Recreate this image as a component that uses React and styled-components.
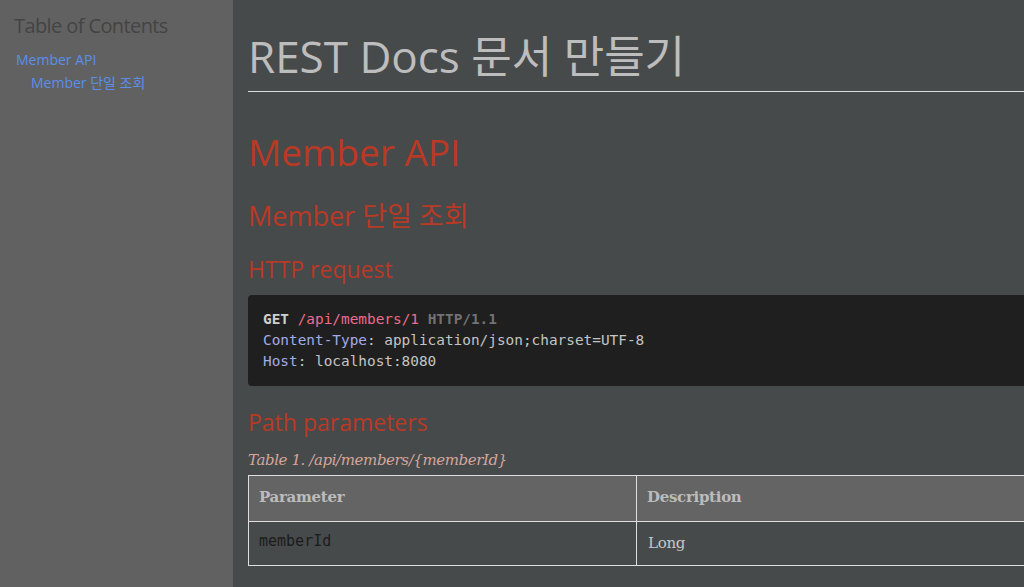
import styled, { createGlobalStyle } from "styled-components"

const GlobalStyle = createGlobalStyle`
  html, body {
    margin: 0;
    padding: 0;
    background: #474a4b;
    overflow: hidden;
  }
`

const Page = styled.div`
  display: flex;
  min-height: 100vh;
  width: 1024px;
  overflow: hidden;
  font-family: "Open Sans", "Noto Sans CJK KR", sans-serif;
`

const Toc = styled.nav`
  flex: 0 0 233px;
  background: #616161;
  padding: 14px 0 0 14px;
  box-sizing: border-box;
`

const TocTitle = styled.div`
  font-size: 20px;
  line-height: 24px;
  color: #444444;
  letter-spacing: -0.6px;
  margin-bottom: 10px;
`

const TocList = styled.ul`
  list-style: none;
  margin: 0;
  padding: 0 0 0 ${(p) => p.$indent || 2}px;
`

const TocItem = styled.li`
  font-size: 14px;
  line-height: 23px;
  a {
    color: #5b8fe8;
    text-decoration: none;
  }
`

const Main = styled.main`
  flex: 0 0 790px;
  padding: 30px 0 0 15px;
`

const Title = styled.h1`
  margin: 0;
  font-size: 44px;
  line-height: 53px;
  font-weight: 400;
  color: #bdbdbd;
  padding-bottom: 8px;
  border-bottom: 1px solid #dcdcdc;
`

const Heading = styled.h2`
  margin: ${(p) => p.$top}px 0 0;
  font-size: ${(p) => p.$size}px;
  line-height: 1.2;
  font-weight: 400;
  color: #ba3925;
`

const Listing = styled.pre`
  margin: 12px 0 0;
  background: #1f1f1f;
  border-radius: 4px;
  padding: 14px 15px 14px;
  font-family: "DejaVu Sans Mono", monospace;
  font-size: 14.4px;
  line-height: 21px;
  color: #c4c4c4;
`

const Tok = styled.span`
  color: ${(p) => p.$c};
  font-weight: ${(p) => (p.$bold ? 700 : 400)};
`

const Caption = styled.div`
  margin-top: 13px;
  font-family: "DejaVu Serif", serif;
  font-style: italic;
  font-size: 15px;
  line-height: 20px;
  color: #d3a69d;
  letter-spacing: -0.4px;
`

const Table = styled.table`
  margin-top: 5px;
  width: 790px;
  border-collapse: collapse;
  table-layout: fixed;
  font-family: "DejaVu Serif", serif;
  font-size: 15px;
`

const Th = styled.th`
  background: #646464;
  border: 1px solid #dedede;
  height: 43px;
  padding: 0 10px 2px;
  text-align: left;
  color: #bcbcbc;
  font-weight: 700;
  letter-spacing: -0.3px;
`

const Td = styled.td`
  border: 1px solid #dedede;
  height: ${(p) => (p.$mono ? 39 : 43)}px;
  padding: ${(p) => (p.$mono ? "0 10px 4px" : "0 11px")};
  color: #c8c8c8;
  letter-spacing: -0.3px;
  font-family: ${(p) => (p.$mono ? '"DejaVu Sans Mono", monospace' : "inherit")};
  ${(p) => p.$mono && "color: #1c1c1c; font-size: 15px; letter-spacing: 0;"}
`

export default function App() {
  return (
    <>
      <GlobalStyle />
      <Page>
        <Toc>
          <TocTitle>Table of Contents</TocTitle>
          <TocList>
            <TocItem>
              <a href="#member-api">Member API</a>
              <TocList $indent={15}>
                <TocItem>
                  <a href="#member-get">Member 단일 조회</a>
                </TocItem>
              </TocList>
            </TocItem>
          </TocList>
        </Toc>
        <Main>
          <Title>REST Docs 문서 만들기</Title>
          <Heading as="h2" $size={37} $top={38}>Member API</Heading>
          <Heading as="h3" $size={27} $top={26}>Member 단일 조회</Heading>
          <Heading as="h4" $size={23} $top={23}>HTTP request</Heading>
          <Listing>
            <Tok $c="#cfcfcf" $bold>GET</Tok> <Tok $c="#ec6b8e">/api/members/1</Tok>{" "}
            <Tok $c="#727272" $bold>HTTP/1.1</Tok>
            {"\n"}
            <Tok $c="#a3abe6">Content-Type</Tok>: application/json;charset=UTF-8
            {"\n"}
            <Tok $c="#a3abe6">Host</Tok>: localhost:8080
          </Listing>
          <Heading as="h4" $size={23} $top={23}>Path parameters</Heading>
          <Caption>Table 1. /api/members/{"{memberId}"}</Caption>
          <Table>
            <colgroup>
              <col style={{ width: 388 }} />
              <col />
            </colgroup>
            <thead>
              <tr>
                <Th>Parameter</Th>
                <Th>Description</Th>
              </tr>
            </thead>
            <tbody>
              <tr>
                <Td $mono>memberId</Td>
                <Td>Long</Td>
              </tr>
            </tbody>
          </Table>
        </Main>
      </Page>
    </>
  )
}
